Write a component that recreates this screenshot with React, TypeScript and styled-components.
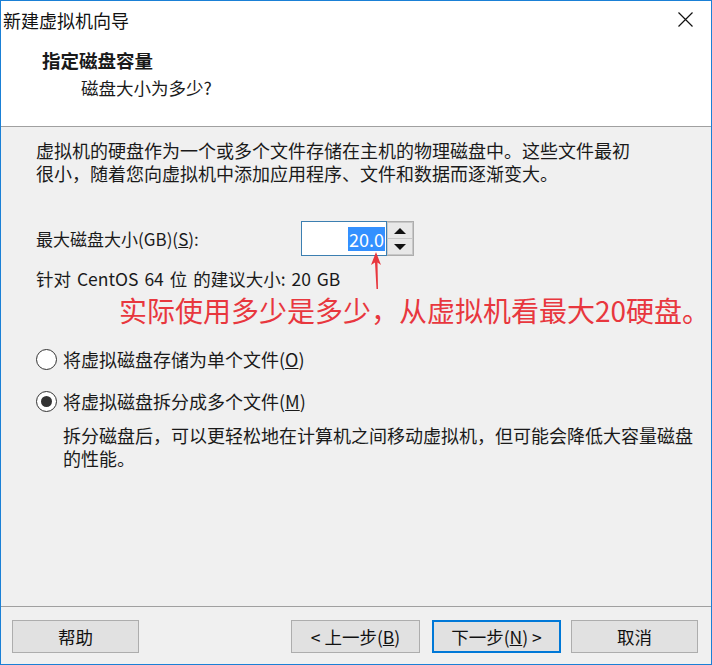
import React from 'react';
import styled, { createGlobalStyle } from 'styled-components';

const GlobalStyle = createGlobalStyle`
  body {
    margin: 0;
    background: #ffffff;
  }
  * {
    box-sizing: border-box;
  }
`;

const FONT = `"Noto Sans CJK SC", "Noto Sans", sans-serif`;

const Window = styled.div`
  width: 712px;
  height: 665px;
  border: 1px solid #1a80d6;
  display: flex;
  flex-direction: column;
  font-family: ${FONT};
  font-size: 17px;
  color: #1a1a1a;
  background: #f0f0f0;
`;

const TitleBar = styled.div`
  height: 37px;
  background: #fff;
  display: flex;
  align-items: center;
  justify-content: space-between;
  padding: 0 18px 0 2px;
  font-size: 18px;
  color: #111;
`;

const Header = styled.div`
  height: 89px;
  background: #fff;
  padding: 10px 0 0 41px;
  border-bottom: 1px solid #a0a0a0;
`;

const HeaderTitle = styled.div`
  font-size: 18.5px;
  font-weight: 700;
  line-height: 24px;
`;

const HeaderSub = styled.div`
  font-size: 17.5px;
  line-height: 24px;
  margin: 4px 0 0 39px;
`;

const Content = styled.div`
  flex: 1;
  position: relative;
  padding: 12px 10px 0 35px;
`;

const Paragraph = styled.p<{ $indent?: number }>`
  margin: 0;
  margin-left: ${(p) => p.$indent ?? 0}px;
  line-height: 22.5px;
  font-size: 18px;
  white-space: nowrap;
`;

const SizeRow = styled.div`
  display: flex;
  align-items: center;
  margin-top: 37px;
`;

const SizeLabel = styled.div`
  width: 265px;
  font-size: 17px;
`;

const SpinBox = styled.div`
  display: flex;
  height: 35px;
`;

const SpinField = styled.div`
  width: 86px;
  height: 35px;
  background: #fff;
  border: 1px solid #3c7fb1;
  display: flex;
  align-items: center;
  justify-content: flex-end;
  padding-right: 1px;
`;

const Selected = styled.span`
  background: #3390ff;
  color: #fff;
  font-size: 18px;
  line-height: 24px;
  padding: 0 1px;
`;

const SpinButtons = styled.div`
  display: flex;
  flex-direction: column;
  width: 27px;
  border: 1px solid #adadad;
  border-left: none;
  background: #e8e8e8;
`;

const SpinButton = styled.div<{ $down?: boolean }>`
  flex: 1;
  display: flex;
  align-items: center;
  justify-content: center;
  border: 1px solid #c8c8c8;
  border-top: ${(p) => (p.$down ? 'none' : '1px solid #c8c8c8')};
  &::after {
    content: '';
    width: 0;
    height: 0;
    border-left: 6px solid transparent;
    border-right: 6px solid transparent;
    ${(p) => (p.$down ? 'border-top: 6px solid #111;' : 'border-bottom: 6px solid #111;')}
  }
`;

const Hint = styled.div`
  margin-top: 12px;
  line-height: 22px;
  font-size: 17.5px;
  word-spacing: 2px;
`;

const Note = styled.div`
  margin: 3px 0 0 83px;
  padding-bottom: 2px;
  color: #e8373e;
  font-size: 28px;
  line-height: 34px;
  white-space: nowrap;
`;

const Arrow = styled.svg`
  position: absolute;
  left: 366px;
  top: 124px;
`;

const RadioRow = styled.label`
  display: flex;
  align-items: center;
  height: 24px;
  margin-top: 18px;
  font-size: 18px;
  gap: 6px;
`;

const RadioDot = styled.span<{ $checked?: boolean }>`
  width: 21px;
  height: 21px;
  border-radius: 50%;
  border: 1.5px solid #333;
  background: #fff;
  display: flex;
  align-items: center;
  justify-content: center;
  &::after {
    content: '';
    width: 11px;
    height: 11px;
    border-radius: 50%;
    background: ${(p) => (p.$checked ? '#333' : 'transparent')};
  }
`;

const Description = styled.div`
  margin-top: 11px;
`;

const Footer = styled.div`
  height: 58px;
  border-top: 1px solid #a0a0a0;
  display: flex;
  padding: 13px 13px 0 11px;
`;

const Button = styled.div<{ $primary?: boolean; $width?: number }>`
  width: ${(p) => p.$width ?? 128}px;
  height: 33px;
  background: #e1e1e1;
  border: ${(p) => (p.$primary ? '2px solid #0078d7' : '1px solid #adadad')};
  display: flex;
  align-items: center;
  justify-content: center;
  font-size: 17.5px;
  color: #111;
`;

const Spacer = styled.div`
  flex: 1;
`;

const ButtonGap = styled.div<{ $w: number }>`
  width: ${(p) => p.$w}px;
`;

const U = styled.span`
  text-decoration: underline;
`;

export default function App() {
  return (
    <>
      <GlobalStyle />
      <Window>
        <TitleBar>
          <span>新建虚拟机向导</span>
          <svg width="15" height="15" viewBox="0 0 15 15">
            <path d="M0.5 0.5 L14.5 14.5 M14.5 0.5 L0.5 14.5" stroke="#111" strokeWidth="1.2" />
          </svg>
        </TitleBar>
        <Header>
          <HeaderTitle>指定磁盘容量</HeaderTitle>
          <HeaderSub>磁盘大小为多少?</HeaderSub>
        </Header>
        <Content>
          <Paragraph>
            虚拟机的硬盘作为一个或多个文件存储在主机的物理磁盘中。这些文件最初
            <br />
            很小，随着您向虚拟机中添加应用程序、文件和数据而逐渐变大。
          </Paragraph>
          <SizeRow>
            <SizeLabel>
              最大磁盘大小(GB)(<U>S</U>):
            </SizeLabel>
            <SpinBox>
              <SpinField>
                <Selected>20.0</Selected>
              </SpinField>
              <SpinButtons>
                <SpinButton />
                <SpinButton $down />
              </SpinButtons>
            </SpinBox>
          </SizeRow>
          <Hint>针对 CentOS 64 位 的建议大小: 20 GB</Hint>
          <Note>实际使用多少是多少，从虚拟机看最大20硬盘。</Note>
          <Arrow width="18" height="40" viewBox="0 0 18 40">
            <path d="M9 1 L14 14 L10.5 11.5 L11 38 L9.5 38 L8 11.5 L4 14 Z" fill="#e8373e" />
          </Arrow>
          <RadioRow>
            <RadioDot />
            <span>
              将虚拟磁盘存储为单个文件(<U>O</U>)
            </span>
          </RadioRow>
          <RadioRow>
            <RadioDot $checked />
            <span>
              将虚拟磁盘拆分成多个文件(<U>M</U>)
            </span>
          </RadioRow>
          <Description>
            <Paragraph $indent={27}>
              拆分磁盘后，可以更轻松地在计算机之间移动虚拟机，但可能会降低大容量磁盘
              <br />
              的性能。
            </Paragraph>
          </Description>
        </Content>
        <Footer>
          <Button $width={127}>帮助</Button>
          <Spacer />
          <Button $width={129}>
            &lt; 上一步(<U>B</U>)
          </Button>
          <ButtonGap $w={12} />
          <Button $primary $width={129}>
            下一步(<U>N</U>) &gt;
          </Button>
          <ButtonGap $w={10} />
          <Button $width={127}>取消</Button>
        </Footer>
      </Window>
    </>
  );
}
